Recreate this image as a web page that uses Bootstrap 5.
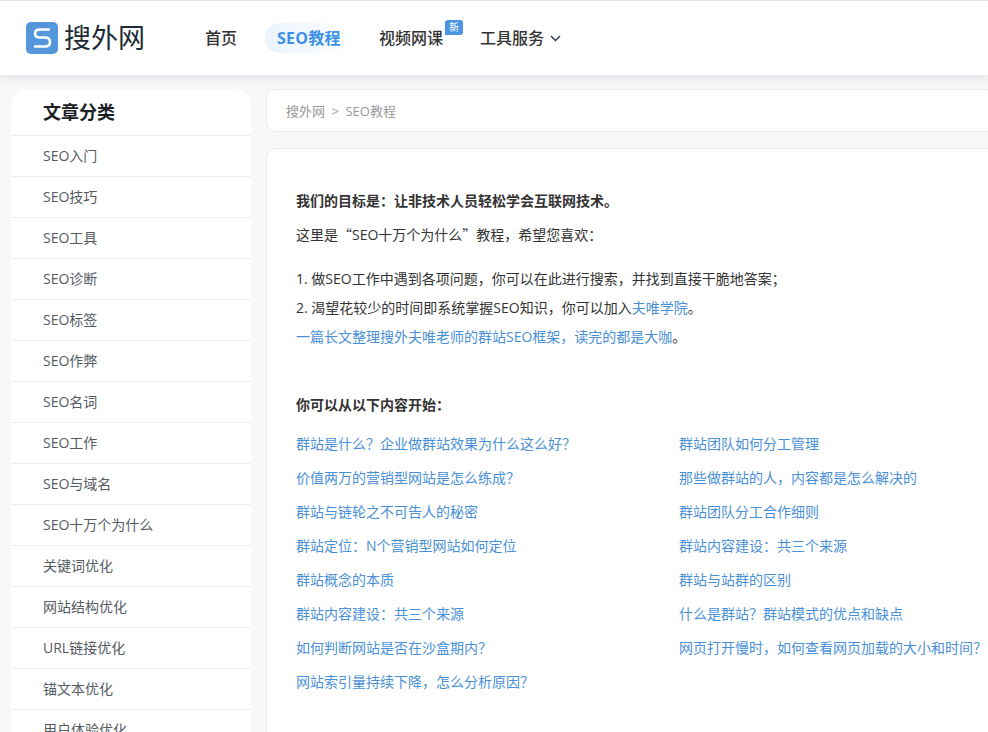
<!DOCTYPE html>
<html lang="zh-CN">
<head>
<meta charset="utf-8">
<title>SEO教程</title>
<link href="https://cdn.jsdelivr.net/npm/bootstrap@5.3.0/dist/css/bootstrap.min.css" rel="stylesheet">
<style>
html,body{height:732px;overflow:hidden}
body{background:#f8f8f9;font-family:"Open Sans","Noto Sans CJK SC",sans-serif;font-size:14px;color:#333;width:988px}
a{text-decoration:none}
.topbar{height:75px;background:#fff;border-top:1px solid #e4e4e4;box-shadow:0 2px 12px rgba(60,80,120,.14);padding-left:26px;position:relative;z-index:2}
.logo-mark{width:32px;height:32px;background:#5496db;border-radius:5px;flex:none}
.logo-text{font-size:27px;color:#1e2a35;margin-left:6px;line-height:32px;width:82px;letter-spacing:0;white-space:nowrap}
.menu-link{font-size:16px;color:#333;font-weight:500;line-height:30px;white-space:nowrap}
.menu-first{margin-left:59px}
.menu-active{color:#3c92e8;font-weight:700;background:linear-gradient(90deg,#eaf3fd,#fff);border-radius:15px;padding:0 0 0 12px;margin-left:28px;width:87px;letter-spacing:.25px}
.menu-video{margin-left:27px;position:relative}
.menu-tools{margin-left:37px;gap:6px}
.new-tag{position:absolute;left:66px;top:-3px;width:18px;height:15px;background:#4a94e0;border-radius:3px 3px 3px 0;color:#fff;font-size:10px;line-height:15px;text-align:center;font-weight:400}
.page-wrap{padding:14px 0 0 11px;width:1250px;gap:15px}
.side-panel{width:240px;background:#fff;border-radius:16px 16px 0 0;flex:none}
.side-title{height:47px;font-size:18px;font-weight:700;color:#1b1f24;padding-left:32px;line-height:47px;border-bottom:1px solid #e9edf4}
.side-item{display:block;height:41px;line-height:40px;padding-left:32px;color:#555b63;border-bottom:1px solid #e9edf4;font-size:14px}
.crumb-box{height:43px;background:#fff;border:1px solid #e6edf5;border-radius:10px;padding-left:19px;line-height:43px;color:#999;font-size:13px}
.crumb-box a{color:#999}
.crumb-sep{margin:0 6.5px}
.main-box{margin-top:16px;background:#fff;border:1px solid #ececef;border-radius:10px;height:700px;padding:35px 0 0 29px}
.main-line{line-height:34px;color:#333;margin:0;white-space:nowrap}
.line-intro{line-height:33px}
.line-tight{line-height:29px}
.main-box a{color:#4a90d6}
.gap-top{margin-top:13px}
.gap-big{margin-top:37px}
.link-columns{width:770px;margin-top:5px}
.link-col{width:383px;flex:none}
.link-col a{display:block;height:34px;line-height:34px;white-space:nowrap}
.cjk-quote{font-family:"Noto Sans CJK SC",sans-serif}
</style>
</head>
<body>
<header class="topbar d-flex align-items-center">
  <svg class="logo-mark" viewBox="0 0 32 32" aria-hidden="true"><path d="M24 7.5H14C10.8 7.5 9 9.3 9 11.5C9 14 10.8 15.5 14 15.5H19C22 15.5 24 17.2 24 20C24 22.8 22 24.5 19 24.5H8" fill="none" stroke="#fff" stroke-width="2.6"/></svg>
  <span class="logo-text">搜外网</span>
  <a href="#" class="menu-link menu-first">首页</a>
  <a href="#" class="menu-link menu-active">SEO教程</a>
  <a href="#" class="menu-link menu-video">视频网课<span class="new-tag">新</span></a>
  <a href="#" class="menu-link menu-tools d-flex align-items-center">工具服务<svg width="11" height="7" viewBox="0 0 11 7" aria-hidden="true"><path d="M1 1l4.5 4.5L10 1" fill="none" stroke="#2b3540" stroke-width="1.4"/></svg></a>
</header>
<div class="page-wrap d-flex">
  <aside class="side-panel">
    <div class="side-title">文章分类</div>
    <a href="#" class="side-item">SEO入门</a>
    <a href="#" class="side-item">SEO技巧</a>
    <a href="#" class="side-item">SEO工具</a>
    <a href="#" class="side-item">SEO诊断</a>
    <a href="#" class="side-item">SEO标签</a>
    <a href="#" class="side-item">SEO作弊</a>
    <a href="#" class="side-item">SEO名词</a>
    <a href="#" class="side-item">SEO工作</a>
    <a href="#" class="side-item">SEO与域名</a>
    <a href="#" class="side-item">SEO十万个为什么</a>
    <a href="#" class="side-item">关键词优化</a>
    <a href="#" class="side-item">网站结构优化</a>
    <a href="#" class="side-item">URL链接优化</a>
    <a href="#" class="side-item">锚文本优化</a>
    <a href="#" class="side-item">用户体验优化</a>
  </aside>
  <main class="flex-grow-1">
    <div class="crumb-box"><a href="#">搜外网</a><span class="crumb-sep">&gt;</span><a href="#">SEO教程</a></div>
    <div class="main-box">
      <p class="main-line fw-bold">我们的目标是：让非技术人员轻松学会互联网技术。</p>
      <p class="main-line line-intro">这里是<span class="cjk-quote">“</span>SEO十万个为什么<span class="cjk-quote">”</span>教程，希望您喜欢：</p>
      <p class="main-line line-tight gap-top">1. 做SEO工作中遇到各项问题，你可以在此进行搜索，并找到直接干脆地答案；</p>
      <p class="main-line line-tight">2. 渴望花较少的时间即系统掌握SEO知识，你可以加入<a href="#">夫唯学院</a>。</p>
      <p class="main-line line-tight"><a href="#">一篇长文整理搜外夫唯老师的群站SEO框架，读完的都是大咖</a>。</p>
      <p class="main-line fw-bold gap-big">你可以从以下内容开始：</p>
      <div class="link-columns d-flex">
        <div class="link-col">
          <a href="#">群站是什么？企业做群站效果为什么这么好？</a>
          <a href="#">价值两万的营销型网站是怎么练成？</a>
          <a href="#">群站与链轮之不可告人的秘密</a>
          <a href="#">群站定位：N个营销型网站如何定位</a>
          <a href="#">群站概念的本质</a>
          <a href="#">群站内容建设：共三个来源</a>
          <a href="#">如何判断网站是否在沙盒期内？</a>
          <a href="#">网站索引量持续下降，怎么分析原因？</a>
        </div>
        <div class="link-col">
          <a href="#">群站团队如何分工管理</a>
          <a href="#">那些做群站的人，内容都是怎么解决的</a>
          <a href="#">群站团队分工合作细则</a>
          <a href="#">群站内容建设：共三个来源</a>
          <a href="#">群站与站群的区别</a>
          <a href="#">什么是群站？群站模式的优点和缺点</a>
          <a href="#">网页打开慢时，如何查看网页加载的大小和时间？</a>
        </div>
      </div>
    </div>
  </main>
</div>
<script src="https://cdn.jsdelivr.net/npm/bootstrap@5.3.0/dist/js/bootstrap.bundle.min.js"></script>
</body>
</html>
